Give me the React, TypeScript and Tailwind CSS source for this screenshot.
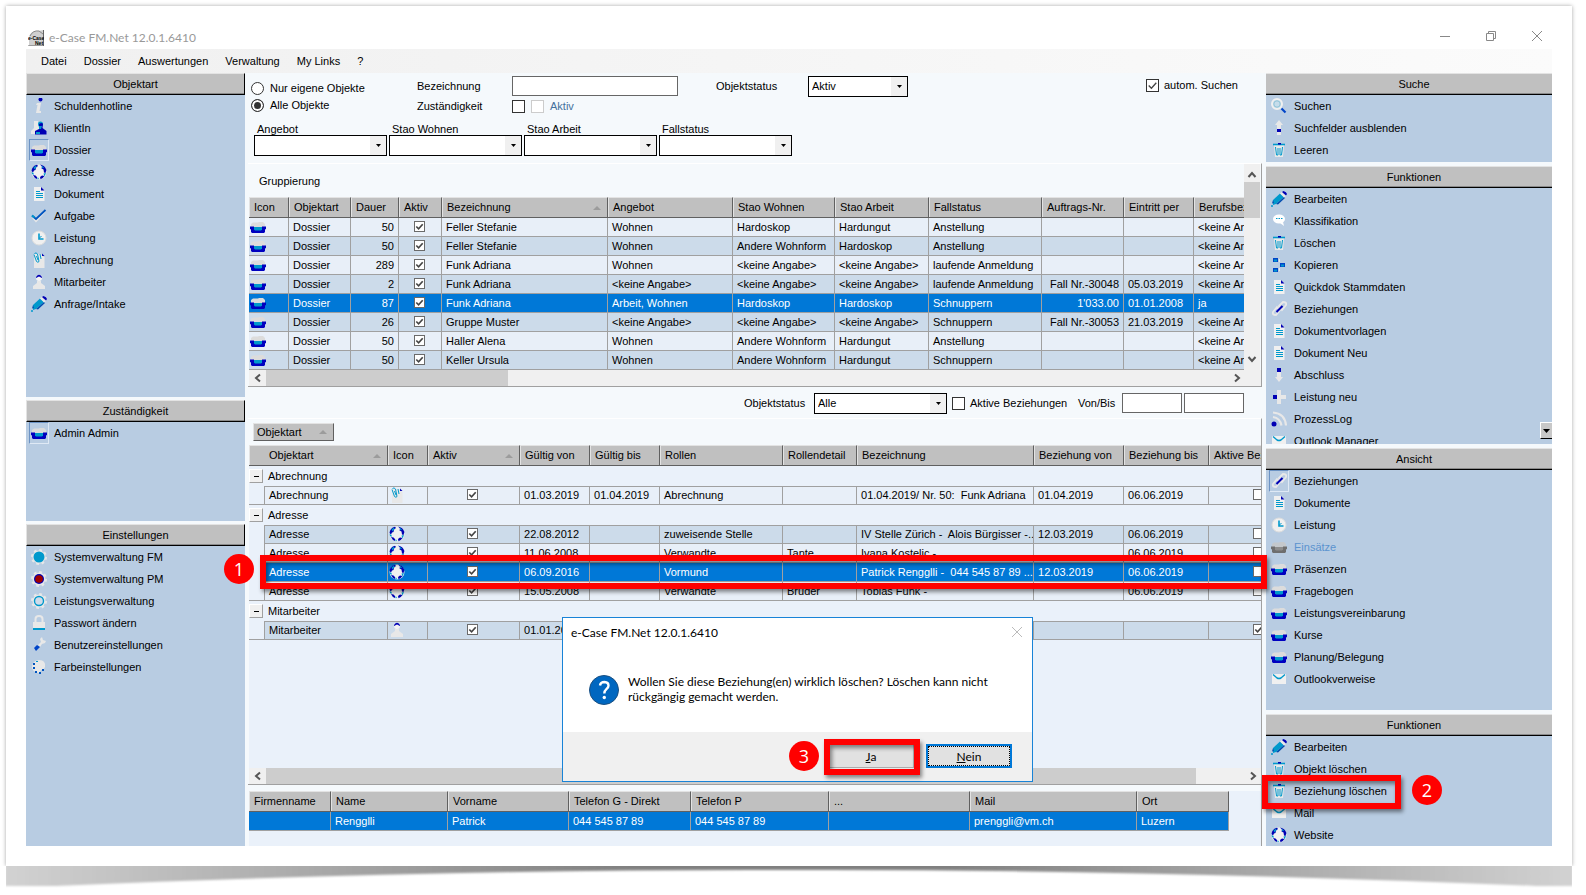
import React from "react";
import clsx from "clsx";

type IconName =
  | "info" | "client" | "dossier" | "globe" | "doc" | "check" | "clock" | "clip" | "user" | "pencil"
  | "gearFull" | "gearRed" | "gearRing" | "lock" | "wrench" | "palette" | "search" | "up" | "trash"
  | "bubble" | "copy" | "link" | "down" | "plus" | "rss" | "mail" | "dossierOff";

interface IconProps {
  name: IconName;
}

const NAVY = "#0000b4";
const CYAN = "#0099cc";
const LIGHT = "#e8e8e8";

const dossier = (body: string, inner: string, lid: string) => (
  <>
    <path d="M1 5l2-1.500h5L9 3h4l2 2v3H1z" fill={lid} />
    <path d="M0 7.500h4V9h8V7.500h4V10l-1 .500V13l-1 1H2l-1-1v-2.500L0 10z" fill={body} />
    <path d="M4 8h8v2.500l-1 1H5l-1-1z" fill={inner} />
  </>
);

const gear = (center: React.ReactNode) => (
  <>
    <circle cx="8" cy="8" r="7" fill="none" stroke={LIGHT} strokeWidth="2" strokeDasharray="2.750 2.750" />
    <circle cx="8" cy="8" r="6.500" fill={LIGHT} />
    {center}
  </>
);

const drawings: Record<IconName, React.ReactNode> = {
  info: (
    <>
      <circle cx="9.500" cy="1.500" r="2" fill={NAVY} />
      <path d="M6 5h4L8.500 13H10v2H5l1.500-8H5z" fill={LIGHT} />
    </>
  ),
  client: (
    <>
      <path d="M3 1h4v5l2 3-2 5H0v-3l3-3z" fill={LIGHT} />
      <circle cx="9.500" cy="4" r="2.500" fill={CYAN} />
      <path d="M8 4q3-2 4 0l-.500 4 4 3v3.500H4V11l4-2z" fill={NAVY} />
      <path d="M8 6h3l-1 3H8zM5 12h4v2H5z" fill={CYAN} />
    </>
  ),
  dossier: dossier("#0000c0", CYAN, "#dcdcdc"),
  dossierOff: dossier("#6e6e6e", "#8c8c8c", "#c4c8cc"),
  globe: (
    <>
      <circle cx="8" cy="8" r="7.500" fill="#f0f0f0" />
      <path d="M.500 7Q1 2 6 .800L7 2 5 3.500 4.500 6 3 6.500 2 8.500zM9 .600Q14 1.500 15.400 6L14.500 9 13 8.500 12.500 5.500 10.500 4.500 11 2.500zM2 11l2.500.500L6 13v2Q3.500 14.500 2 11zM9 13l2-1.500 2.500.500Q12 14.500 9.500 15.300z" fill={NAVY} />
      <path d="M2.500 3.500L5 1.500l.500 1.500-2 2.500zM10.500 1.500l2.500 2-1.500 1zM.600 8l2 1v2L1 10zM12.500 9.500l2.500-.500-1.500 3.500zM6 13.500l2 .500-1 1.500z" fill={CYAN} />
    </>
  ),
  doc: (
    <>
      <path d="M3 1h7l3.500 3.500V15H3z" fill="#f0f0f0" />
      <path d="M10 1l3.500 3.500H10z" fill={NAVY} />
      <path d="M5 5.500h4M5 7.500h7M5 9.500h7M5 11.500h7" stroke={CYAN} />
    </>
  ),
  check: (
    <>
      <path d="M2 9.500L5 13 14 3" fill="none" stroke={LIGHT} strokeWidth="2" />
      <path d="M1 7.500L5 11l9.500-9" fill="none" stroke="#0055c0" strokeWidth="1.800" />
      <path d="M1 7.500L3.500 9.500" stroke={CYAN} strokeWidth="1.800" />
    </>
  ),
  clock: (
    <>
      <circle cx="8" cy="8" r="7" fill="#f0f0f0" stroke="#dcdcdc" />
      <path d="M8 3.500v5.500h4.500" fill="none" stroke={CYAN} strokeWidth="1.600" />
      <path d="M8.500 8l2-2" stroke={CYAN} />
    </>
  ),
  clip: (
    <>
      <path d="M3 2h7l3.500 3.500V16H3z" fill={LIGHT} />
      <path d="M11 1.500l2.500 2.500H11z" fill={NAVY} />
      <path d="M3 2.500l2.500 7q1.500 1.500 2.500 0L6.500 2Q5 0 3.500 1.500M5.500 4l1.500 4M9 2l1 5" fill="none" stroke={CYAN} />
    </>
  ),
  user: (
    <>
      <circle cx="8" cy="4" r="3" fill="#f4f4f4" />
      <path d="M5 3q3-4.500 6 0v1L8 2.500 5 4z" fill={NAVY} />
      <path d="M6 7h4v2l4 3v3H2v-3l4-3z" fill={LIGHT} />
    </>
  ),
  pencil: (
    <>
      <path d="M2 9l7-6.500L13 6l-8 7-3 1z" fill={CYAN} />
      <path d="M5 13l8-7 1 1-7 6.500zM2 9l1 3-2 .500z" fill="#004db0" />
      <path d="M9 2.500l2-1.500 4 4-2 1.500z" fill={LIGHT} />
      <path d="M11 1l1.500-1q3 1 3.500 3l-1 1.500z" fill={NAVY} />
      <circle cx="1" cy="15" r="1" fill={CYAN} />
    </>
  ),
  gearFull: gear(<circle cx="8" cy="8" r="5.500" fill={CYAN} />),
  gearRed: gear(<><circle cx="8" cy="8" r="5" fill={NAVY} /><circle cx="8" cy="8" r="3.800" fill="#a00000" /></>),
  gearRing: gear(<circle cx="8" cy="8" r="4.500" fill="#d0dcea" stroke={CYAN} strokeWidth="1.400" />),
  lock: (
    <>
      <path d="M4.500 7V4q0-3 3.500-3t3.500 3v3" fill="none" stroke={LIGHT} strokeWidth="2" />
      <path d="M2 7h12v6H2z" fill={LIGHT} />
      <path d="M2 13h12v2H2z" fill={CYAN} />
    </>
  ),
  wrench: (
    <>
      <path d="M7 8l3-3-1-3 2-2 1 3 3 1-1 2-3 1-2 3z" fill={LIGHT} />
      <path d="M3 11l3-3 3 2-4 4z" fill="#0044c8" />
    </>
  ),
  palette: (
    <>
      <path d="M8 1q7 0 6 7-1 3-4 3l-2 3Q1 13 1 8q0-6 7-7z" fill={LIGHT} />
      <path d="M2 4h2v2H2zM2 8h2v2H2zM4 12h2v2H4zM8 13h2v2H8zM11 10h2v2h-2z" fill="#0055c0" />
      <path d="M5 2h2v1H5z" fill={CYAN} />
    </>
  ),
  search: (
    <>
      <circle cx="6" cy="6" r="5" fill="#c6dcea" stroke="#f0f0f0" strokeWidth="2" />
      <circle cx="6" cy="6" r="3.200" fill="none" stroke="#8fc4d8" />
      <path d="M10.500 10.500l4 4" stroke="#0044c8" strokeWidth="2.200" />
    </>
  ),
  up: (
    <>
      <path d="M8 0l4 5h-2v4H6V5H4z" fill={LIGHT} />
      <path d="M6 9h4v3H6z" fill={NAVY} />
      <path d="M6 12h4v3H6z" fill={LIGHT} />
    </>
  ),
  down: (
    <>
      <path d="M6 1h4v4H6z" fill={NAVY} />
      <path d="M6 5h4v5h2l-4 5-4-5h2z" fill={LIGHT} />
    </>
  ),
  trash: (
    <>
      <path d="M3 3h10l-1 12H4z" fill={LIGHT} />
      <path d="M2 2.500h12" stroke={CYAN} strokeWidth="1.600" />
      <path d="M7 1h3v1.500H7z" fill={NAVY} />
      <path d="M4.500 5l1 8H7V6M11.500 5l-1 8H9V6" fill="none" stroke={CYAN} />
    </>
  ),
  bubble: (
    <>
      <ellipse cx="8" cy="6" rx="6" ry="4.500" fill="#fff" />
      <path d="M9 10l4 3-1-4z" fill="#fff" />
      <path d="M5 5h1.500v1H5zM7.500 5H9v1H7.500zM10 5h1.500v1H10z" fill={CYAN} />
    </>
  ),
  copy: (
    <>
      <path d="M2 1h5v4H2zM2 11h5v4H2zM9 6h5v4H9z" fill="#0044c8" />
      <path d="M3 2.500h3v2H3zM3 12.500h3v2H3zM10 7.500h3v2h-3z" fill={CYAN} />
      <path d="M8.500 2v3M8.500 11v3" stroke={LIGHT} />
    </>
  ),
  link: (
    <>
      <path d="M2 11l4-5 3 3-4 5q-4 0-3-3zM8 5l4-4q4 0 3 3l-4 5z" fill="none" stroke={LIGHT} strokeWidth="1.800" />
      <path d="M5.500 11l6-6" stroke={NAVY} strokeWidth="2" />
    </>
  ),
  plus: (
    <>
      <path d="M6 1h4v5h5v4h-5v5H6v-5H4V6h2z" fill={LIGHT} />
      <path d="M2 6h4v4H2z" fill={NAVY} />
    </>
  ),
  rss: (
    <>
      <path d="M2 1.500q12 1 13 13M2 6q7 1 8.500 8.500" fill="none" stroke={LIGHT} strokeWidth="2.200" />
      <circle cx="3" cy="13" r="2.500" fill={NAVY} />
    </>
  ),
  mail: (
    <>
      <path d="M1 3h14v10H1z" fill="#f0f0f0" />
      <path d="M2 3.500l4 3.500q2 1 4 0l4-3.500" fill="none" stroke={CYAN} strokeWidth="1.400" />
    </>
  ),
};

const Icon: React.FC<IconProps> = ({ name }) => (
  <svg viewBox="0 0 16 16" className="block h-4 w-4 shrink-0" aria-hidden="true">
    {drawings[name]}
  </svg>
);

interface Item {
  icon: IconName;
  label: string;
  selected?: boolean;
  disabled?: boolean;
}

interface PanelProps {
  title: string;
  items: Item[];
  right?: boolean;
  className?: string;
  children?: React.ReactNode;
}

const Panel: React.FC<PanelProps> = (props) => (
  <section className={clsx("relative flex flex-col overflow-hidden bg-[#b8cce2]", props.className)}>
    <h2
      className={clsx(
        "flex h-[22px] shrink-0 items-center justify-center border-t border-b border-t-[#e3e3e3] border-b-black bg-[#c0c0c0] shadow-[inset_0_-1px_0_#8a8a8a]",
        props.right ? "pl-2.5" : "border-r border-l border-r-black border-l-[#e3e3e3]"
      )}
    >
      {props.title}
    </h2>
    <ul>
      {props.items.map((item) => (
        <li key={item.label}>
          <button
            type="button"
            disabled={item.disabled}
            className={clsx("flex h-[22px] w-full items-center text-left", item.disabled && "text-[#5b93cf]")}
          >
            <span
              className={clsx(
                "mr-[5px] ml-[3px] flex h-[22px] w-5 items-center justify-center border",
                item.selected ? "border-t-[#6c93c4] border-r-[#dfe9f5] border-b-[#dfe9f5] border-l-[#6c93c4]" : "border-transparent"
              )}
            >
              <Icon name={item.icon} />
            </span>
            {item.label}
          </button>
        </li>
      ))}
    </ul>
    {props.children}
  </section>
);

interface CheckProps {
  id?: string;
  label?: string;
  checked?: boolean;
  small?: boolean;
  disabled?: boolean;
}

const Check: React.FC<CheckProps> = ({ id, label, checked, small, disabled }) => (
  <span className={clsx("relative inline-block shrink-0 align-top", small ? "h-[11px] w-[11px]" : "h-[13px] w-[13px]")}>
    <input
      id={id}
      type="checkbox"
      aria-label={label}
      defaultChecked={checked}
      disabled={disabled}
      className={clsx(
        "block h-full w-full appearance-none border bg-white",
        disabled ? "border-[#cccccc]" : small ? "border-[#6a6a6a]" : "border-[#333333]"
      )}
    />
    {checked && (
      <svg viewBox="0 0 12 12" className="pointer-events-none absolute inset-0 h-full w-full">
        <path d="M2.500 6l2.500 2.500L9.500 3.500" fill="none" stroke="#444" strokeWidth={small ? 1.8 : 1.2} />
      </svg>
    )}
  </span>
);

interface ComboProps {
  id: string;
  value?: string;
  className: string;
}

const Combo: React.FC<ComboProps> = ({ id, value, className }) => (
  <span className={clsx("relative block h-[21px]", className)}>
    <select id={id} className="h-full w-full appearance-none border border-black bg-white px-[3px]">
      <option>{value ?? ""}</option>
    </select>
    <span className="pointer-events-none absolute top-px right-px bottom-px flex w-4 items-center justify-center bg-[#f0f0f0]">
      <svg viewBox="0 0 5 3" className="h-[3px] w-[5px]">
        <path d="M0 0h5L2.500 3z" />
      </svg>
    </span>
  </span>
);

const SortMark = () => (
  <svg viewBox="0 0 8 4" className="h-1 w-2 shrink-0">
    <path d="M0 4h8L4 0z" fill="#9c9c9c" />
  </svg>
);

const Chevron: React.FC<{ d: string }> = ({ d }) => (
  <svg viewBox="0 0 10 10" className="h-[10px] w-[10px]">
    <path d={d} fill="none" stroke="#555" strokeWidth="2" />
  </svg>
);

const HScroll: React.FC<{ thumb: string }> = ({ thumb }) => (
  <div className="flex h-4 shrink-0 items-center bg-[#f0f0f0]">
    <span className="flex w-[17px] justify-center"><Chevron d="M7 1.500L3 5l4 3.500" /></span>
    <div className="h-full flex-1">
      <div className={clsx("h-full bg-[#cdcdcd]", thumb)} />
    </div>
    <span className="flex w-[17px] justify-center"><Chevron d="M3 1.500L7 5 3 8.500" /></span>
  </div>
);

const th =
  "h-[21px] overflow-hidden border-t border-r border-b border-t-[#e3e3e3] border-r-[#606060] border-b-[#606060] bg-[#c0c0c0] pl-[5px] text-left font-normal whitespace-nowrap shadow-[inset_1px_0_0_#e3e3e3]";
const td = "h-[19px] overflow-hidden border-r border-b border-[#a0a0a0] pl-1 whitespace-pre";

interface HeadProps {
  label: string;
  sorted?: boolean;
  className?: string;
}

const Head: React.FC<HeadProps> = ({ label, sorted, className }) => (
  <th scope="col" className={clsx(th, className)}>
    <span className="flex items-center justify-between">
      {label}
      {sorted && <span className="pr-1.5"><SortMark /></span>}
    </span>
  </th>
);

const NONE = "<keine Angabe>";
// Dauer, Bezeichnung, Angebot, Stao Wohnen, Stao Arbeit, Fallstatus, Auftrags-Nr., Eintritt per, Berufsbez.
const dossiers = [
  ["50", "Feller Stefanie", "Wohnen", "Hardoskop", "Hardungut", "Anstellung", "", "", NONE],
  ["50", "Feller Stefanie", "Wohnen", "Andere Wohnform", "Hardoskop", "Anstellung", "", "", NONE],
  ["289", "Funk Adriana", "Wohnen", NONE, NONE, "laufende Anmeldung", "", "", NONE],
  ["2", "Funk Adriana", NONE, NONE, NONE, "laufende Anmeldung", "Fall Nr.-30048", "05.03.2019", NONE],
  ["87", "Funk Adriana", "Arbeit, Wohnen", "Hardoskop", "Hardoskop", "Schnuppern", "1'033.00", "01.01.2008", "ja"],
  ["26", "Gruppe Muster", NONE, NONE, NONE, "Schnuppern", "Fall Nr.-30053", "21.03.2019", NONE],
  ["50", "Haller Alena", "Wohnen", "Andere Wohnform", "Hardungut", "Anstellung", "", "", NONE],
  ["50", "Keller Ursula", "Wohnen", "Andere Wohnform", "Hardungut", "Schnuppern", "", "", NONE],
];

interface Relation {
  icon: IconName;
  cells: string[];
  tone: string;
  active?: boolean;
}

const LIGHT_ROW = "bg-[#e8eff8]";
const DARK_ROW = "bg-[#ccdbea]";
const SELECTED_ROW = "bg-[#0078d7] text-white";

// Gültig von, Gültig bis, Rollen, Rollendetail, Bezeichnung, Beziehung von, Beziehung bis
const groups: { name: string; rows: Relation[] }[] = [
  {
    name: "Abrechnung",
    rows: [
      { icon: "clip", tone: LIGHT_ROW, cells: ["01.03.2019", "01.04.2019", "Abrechnung", "", "01.04.2019/ Nr. 50:  Funk Adriana", "01.04.2019", "06.06.2019"] },
    ],
  },
  {
    name: "Adresse",
    rows: [
      { icon: "globe", tone: DARK_ROW, cells: ["22.08.2012", "", "zuweisende Stelle", "", "IV Stelle Zürich -  Alois Bürgisser -...", "12.03.2019", "06.06.2019"] },
      { icon: "globe", tone: LIGHT_ROW, cells: ["11.06.2008", "", "Verwandte", "Tante", "Ivana Kostelic -", "", "06.06.2019"] },
      { icon: "globe", tone: SELECTED_ROW, cells: ["06.09.2016", "", "Vormund", "", "Patrick Rengglli -  044 545 87 89 ...", "12.03.2019", "06.06.2019"] },
      { icon: "globe", tone: LIGHT_ROW, cells: ["15.05.2008", "", "Verwandte", "Bruder", "Tobias Funk -", "", "06.06.2019"] },
    ],
  },
  {
    name: "Mitarbeiter",
    rows: [
      { icon: "user", tone: DARK_ROW, active: true, cells: ["01.01.2008", "", "", "", "", "", ""] },
    ],
  },
];

const SearchForm = () => (
  <form className="relative h-[90px] shrink-0 pt-[3px] pl-[3px]">
    <div className="flex items-start">
      <fieldset className="flex w-[166px] flex-col gap-1 pt-1.5">
        {["Nur eigene Objekte", "Alle Objekte"].map((label, i) => (
          <label key={label} className="flex h-[13px] items-center gap-1.5">
            <input
              type="radio"
              name="scope"
              defaultChecked={i === 1}
              className="h-[13px] w-[13px] appearance-none rounded-full border border-[#333] bg-white checked:bg-[#333] checked:shadow-[inset_0_0_0_2px_#fff]"
            />
            {label}
          </label>
        ))}
      </fieldset>
      <div className="grid w-[391px] grid-cols-[95px_auto] justify-start gap-y-1">
        <label htmlFor="bez" className="flex items-center">Bezeichnung</label>
        <input id="bez" type="text" className="h-5 w-[166px] border border-[#666] bg-white px-1" />
        <label htmlFor="zust" className="flex items-center">Zuständigkeit</label>
        <div className="flex items-center gap-1.5">
          <Check id="zust" />
          <Check id="zust-aktiv" disabled />
          <label htmlFor="zust-aktiv" className="text-[#44719c]">Aktiv</label>
        </div>
      </div>
      <div className="mr-auto -ml-[92px] flex items-center">
        <label htmlFor="status" className="w-[92px]">Objektstatus</label>
        <Combo id="status" value="Aktiv" className="w-[100px]" />
      </div>
      <label htmlFor="auto" className="mt-[3px] mr-6 flex items-center gap-[5px]">
        <Check id="auto" checked />
        autom. Suchen
      </label>
    </div>
    <div className="mt-2.5 flex gap-0.5 pl-[3px]">
      {["Angebot", "Stao Wohnen", "Stao Arbeit", "Fallstatus"].map((label) => (
        <div key={label}>
          <label htmlFor={label} className="block h-3 pl-[3px] leading-3">{label}</label>
          <Combo id={label} className="w-[133px]" />
        </div>
      ))}
    </div>
  </form>
);

const DossierGrid = () => (
  <div className="flex shrink-0 flex-col border-t border-r border-b border-t-white border-r-[#a0a0a0] border-b-[#a0a0a0] pl-px">
    <div className="flex pr-px">
      <div className="min-w-0 flex-1 overflow-hidden">
        <p className="flex h-[33px] items-center pt-0.5 pl-[10px]">Gruppierung</p>
        <table className="w-full table-fixed border-separate border-spacing-0">
          <colgroup>
            <col className="w-[40px]" />
            <col className="w-[62px]" />
            <col className="w-[48px]" />
            <col className="w-[43px]" />
            <col className="w-[166px]" />
            <col className="w-[125px]" />
            <col className="w-[102px]" />
            <col className="w-[94px]" />
            <col className="w-[113px]" />
            <col className="w-[82px]" />
            <col className="w-[70px]" />
            <col />
          </colgroup>
          <thead>
            <tr>
              {["Icon", "Objektart", "Dauer", "Aktiv", "Bezeichnung", "Angebot", "Stao Wohnen", "Stao Arbeit", "Fallstatus", "Auftrags-Nr.", "Eintritt per", "Berufsbez."].map((label) => (
                <Head key={label} label={label} sorted={label === "Bezeichnung"} className={label === "Berufsbez." ? "border-r-0" : undefined} />
              ))}
            </tr>
          </thead>
          <tbody>
            {dossiers.map((row, i) => (
              <tr key={i} className={i === 4 ? SELECTED_ROW : i % 2 || i === 5 ? DARK_ROW : LIGHT_ROW}>
                <td className={clsx(td, "pl-px")}><Icon name="dossier" /></td>
                <td className={td}>Dossier</td>
                <td className={clsx(td, "pr-1 text-right")}>{row[0]}</td>
                <td className={clsx(td, "pr-1.5 text-center")}><Check small checked label="Aktiv" /></td>
                {row.slice(1).map((cell, j) => (
                  <td key={j} className={clsx(td, j === 5 && "pr-1 text-right", j === 7 && "border-r-0")}>{cell}</td>
                ))}
              </tr>
            ))}
          </tbody>
        </table>
      </div>
      <div className="flex w-4 flex-col items-center bg-[#f0f0f0] py-1">
        <span className="flex h-[14px] items-center"><Chevron d="M1.500 7L5 3l3.500 4" /></span>
        <div className="h-9 w-full bg-[#cdcdcd]" />
        <span className="mt-auto flex h-[14px] items-center"><Chevron d="M1.500 3L5 7l3.500-4" /></span>
      </div>
    </div>
    <div className="bg-[#f0f0f0] pr-4">
      <HScroll thumb="w-[242px]" />
    </div>
  </div>
);

const RelationFilter = () => (
  <form className="flex h-[31px] shrink-0 items-center justify-end pt-px pr-[18px]">
    <label htmlFor="rel-status" className="mr-2 w-[62px]">Objektstatus</label>
    <Combo id="rel-status" value="Alle" className="w-[133px]" />
    <label htmlFor="rel-aktiv" className="ml-[5px] flex w-[126px] items-center gap-[5px]">
      <Check id="rel-aktiv" />
      Aktive Beziehungen
    </label>
    <label htmlFor="von" className="mr-1 w-10">Von/Bis</label>
    <input id="von" type="text" className="mr-0.5 h-5 w-[60px] border border-[#666] bg-white px-1" />
    <input type="text" aria-label="Bis" className="h-5 w-[60px] border border-[#666] bg-white px-1" />
  </form>
);

const RelationGrid = () => (
  <div className="flex min-h-0 flex-1 flex-col border-t border-r border-b border-t-white border-r-[#a0a0a0] border-b-[#a0a0a0] pl-px">
    <div className="flex h-[26px] shrink-0 items-center pl-1">
      <button type="button" className="flex h-[18px] w-[81px] items-center justify-between border border-t-[#e3e3e3] border-r-[#606060] border-b-[#606060] border-l-[#e3e3e3] bg-[#c0c0c0] pr-1.5 pl-[3px]">
        Objektart
        <SortMark />
      </button>
    </div>
    <div className="min-h-0 flex-1 overflow-hidden bg-[#eaf1fa]">
      <table className="w-full table-fixed border-separate border-spacing-0">
        <colgroup>
          <col className="w-4" />
          <col className="w-[123px]" />
          <col className="w-[40px]" />
          <col className="w-[92px]" />
          <col className="w-[70px]" />
          <col className="w-[70px]" />
          <col className="w-[123px]" />
          <col className="w-[74px]" />
          <col className="w-[177px]" />
          <col className="w-[90px]" />
          <col className="w-[85px]" />
          <col />
        </colgroup>
        <thead>
          <tr>
            <th scope="col" colSpan={2} className={clsx(th, "pl-[20px]")}>
              <span className="flex items-center justify-between pr-1.5">
                Objektart
                <SortMark />
              </span>
            </th>
            <Head label="Icon" />
            <Head label="Aktiv" sorted />
            {["Gültig von", "Gültig bis", "Rollen", "Rollendetail", "Bezeichnung", "Beziehung von", "Beziehung bis"].map((label) => (
              <Head key={label} label={label} />
            ))}
            <Head label="Aktive Beziehungen" className="border-r-0" />
          </tr>
        </thead>
        {groups.map((group) => (
          <tbody key={group.name}>
            <tr>
              <th scope="rowgroup" colSpan={12} className="h-5 p-0 text-left font-normal">
                <span className="flex items-center gap-[5px]">
                  <button type="button" aria-label={group.name} className="flex h-[14px] w-[14px] items-center justify-center border border-t-white border-r-[#a0a0a0] border-b-[#a0a0a0] border-l-white bg-[#f0f0f0]">
                    <span className="h-px w-[5px] bg-black" />
                  </button>
                  {group.name}
                </span>
              </th>
            </tr>
            {group.rows.map((row, i) => {
              const top = i === 0 && "shadow-[inset_0_1px_0_#a0a0a0]";
              return (
                <tr key={i} className={row.tone}>
                  <td className={clsx("h-[19px] border-r border-[#a0a0a0] bg-[#eaf1fa]", i === group.rows.length - 1 && "border-b")} />
                  <td className={clsx(td, top)}>{group.name}</td>
                  <td className={clsx(td, top, "pl-px")}><Icon name={row.icon} /></td>
                  <td className={clsx(td, top, "pr-1.5 text-center")}><Check small checked label="Aktiv" /></td>
                  {row.cells.map((cell, j) => (
                    <td key={j} className={clsx(td, top)}>{cell}</td>
                  ))}
                  <td className={clsx(td, top, "border-r-0 pl-[44px]")}>
                    <Check small checked={row.active} label="Aktive Beziehung" />
                  </td>
                </tr>
              );
            })}
          </tbody>
        ))}
      </table>
    </div>
    <HScroll thumb="mr-[48px]" />
  </div>
);

const contact = ["", "Rengglli", "Patrick", "044 545 87 89", "044 545 87 89", "", "prenggli@vm.ch", "Luzern"];

const ContactGrid = () => (
  <div className="h-[61px] shrink-0 border-r border-[#a0a0a0] bg-[#f5f9fc] pt-1.5 pl-px">
    <div className="h-full bg-[#eaf1fa]">
      <table className="w-[980px] table-fixed border-separate border-spacing-0">
        <colgroup>
          <col className="w-[82px]" />
          <col className="w-[117px]" />
          <col className="w-[121px]" />
          <col className="w-[122px]" />
          <col className="w-[138px]" />
          <col className="w-[141px]" />
          <col className="w-[167px]" />
          <col className="w-[92px]" />
        </colgroup>
        <thead>
          <tr>
            {["Firmenname", "Name", "Vorname", "Telefon G - Direkt", "Telefon P", "...", "Mail", "Ort"].map((label) => (
              <Head key={label} label={label} />
            ))}
          </tr>
        </thead>
        <tbody>
          <tr className={SELECTED_ROW}>
            {contact.map((cell, i) => (
              <td key={i} className={td}>{cell}</td>
            ))}
          </tr>
        </tbody>
      </table>
    </div>
  </div>
);

const ConfirmDialog = () => (
  <div role="dialog" aria-label="e-Case FM.Net 12.0.1.6410" className="absolute top-[544px] left-[314px] flex h-[165px] w-[471px] flex-col border border-[#1883d7] bg-white font-['Lato',sans-serif] text-[12px] leading-[15px]">
    <div className="flex h-7 items-center justify-between pr-[10px] pl-2">
      <span>e-Case FM.Net 12.0.1.6410</span>
      <button type="button" aria-label="Schliessen">
        <svg viewBox="0 0 10 10" className="h-[10px] w-[10px]">
          <path d="M0 0l10 10M10 0L0 10" stroke="#bbb" />
        </svg>
      </button>
    </div>
    <div className="flex flex-1 items-start pt-7 pl-[26px]">
      <svg viewBox="0 0 30 30" className="mt-px h-[30px] w-[30px] shrink-0">
        <circle cx="15" cy="15" r="14.500" fill="#0067c0" stroke="#1a4f80" />
        <path d="M11 10.500Q11.500 7 15.500 7 19.500 7.200 19.500 10.700C19.500 14 15.300 14 15.300 18.500" fill="none" stroke="#fff" strokeWidth="2.400" />
        <circle cx="15.300" cy="22.500" r="1.700" fill="#fff" />
      </svg>
      <p className="ml-[9px] w-[385px]">
        Wollen Sie diese Beziehung(en) wirklich löschen? Löschen kann nicht rückgängig gemacht werden.
      </p>
    </div>
    <div className="flex h-[49px] items-start justify-end gap-3 bg-[#f0f0f0] pt-3 pr-5">
      <button type="button" className="h-6 w-[86px] border border-[#adadad] bg-[#e1e1e1]">
        <u>J</u>a
      </button>
      <button type="button" className="h-6 w-[86px] border-2 border-[#0078d7] bg-[#e1e1e1] outline-1 -outline-offset-3 outline-dotted outline-black">
        <u>N</u>ein
      </button>
    </div>
  </div>
);

const Marker: React.FC<{ className: string }> = ({ className }) => (
  <div className={clsx("pointer-events-none absolute z-10 border-[6px] border-[#ff0000] shadow-[2px_3px_4px_rgba(0,0,0,0.45),inset_2px_3px_4px_rgba(0,0,0,0.45)]", className)} />
);

const Step: React.FC<{ n: number; className: string }> = ({ n, className }) => (
  <div className={clsx("absolute z-10 flex h-[30px] w-[30px] items-center justify-center rounded-full bg-[#ff0000] font-['Open_Sans',sans-serif] text-[18px] text-white", className)}>
    {n}
  </div>
);

const Logo = () => (
  <svg viewBox="0 0 16 16" className="h-4 w-4" aria-hidden="true">
    <path d="M15.500 0v16H1V8q1-8 9-7z" fill="#d0d0d0" />
    <path d="M2 6q3-6 9-5l4 3" fill="none" stroke="#888" />
    <path d="M15.500 0v16H0" fill="none" stroke="#666" />
    <text x="0" y="9.500" fontSize="5" fontWeight="700" fontFamily="Liberation Sans, sans-serif">e-Case</text>
    <text x="7" y="14.500" fontSize="5" fontWeight="700" fontFamily="Liberation Sans, sans-serif">Net</text>
  </svg>
);

const TitleBar = () => (
  <header>
    <div className="flex h-[23px] items-center pl-0.5">
      <Logo />
      <span className="ml-[5px] font-['Lato',sans-serif] text-[12px] text-[#999]">e-Case FM.Net 12.0.1.6410</span>
      <div className="mr-[10px] mb-1 ml-auto flex gap-9">
        <button type="button" aria-label="Minimieren">
          <svg viewBox="0 0 10 10" className="h-[10px] w-[10px]"><path d="M0 5.500h10" stroke="#888" /></svg>
        </button>
        <button type="button" aria-label="Verkleinern">
          <svg viewBox="0 0 10 10" className="h-[10px] w-[10px]">
            <path d="M.500 2.500h7v7h-7zM2.500 2V.500h7v7H8" fill="none" stroke="#888" />
          </svg>
        </button>
        <button type="button" aria-label="Schliessen">
          <svg viewBox="0 0 10 10" className="h-[10px] w-[10px]"><path d="M0 0l10 10M10 0L0 10" stroke="#888" /></svg>
        </button>
      </div>
    </div>
    <nav className="flex h-6 items-center gap-[17px] bg-linear-to-r from-[#f0f0f0] to-[#fbfbfb] pl-[15px]">
      {["Datei", "Dossier", "Auswertungen", "Verwaltung", "My Links", "?"].map((label) => (
        <button key={label} type="button">{label}</button>
      ))}
    </nav>
  </header>
);

const Sidebar = () => (
  <aside className="flex w-[219px] shrink-0 flex-col gap-[3px]">
    <Panel
      title="Objektart"
      className="h-[324px]"
      items={[
        { icon: "info", label: "Schuldenhotline" },
        { icon: "client", label: "KlientIn" },
        { icon: "dossier", label: "Dossier", selected: true },
        { icon: "globe", label: "Adresse" },
        { icon: "doc", label: "Dokument" },
        { icon: "check", label: "Aufgabe" },
        { icon: "clock", label: "Leistung" },
        { icon: "clip", label: "Abrechnung" },
        { icon: "user", label: "Mitarbeiter" },
        { icon: "pencil", label: "Anfrage/Intake" },
      ]}
    />
    <Panel title="Zuständigkeit" className="h-[121px]" items={[{ icon: "dossier", label: "Admin Admin", selected: true }]} />
    <Panel
      title="Einstellungen"
      className="flex-1"
      items={[
        { icon: "gearFull", label: "Systemverwaltung FM" },
        { icon: "gearRed", label: "Systemverwaltung PM" },
        { icon: "gearRing", label: "Leistungsverwaltung" },
        { icon: "lock", label: "Passwort ändern" },
        { icon: "wrench", label: "Benutzereinstellungen" },
        { icon: "palette", label: "Farbeinstellungen" },
      ]}
    />
  </aside>
);

const Actions = () => (
  <aside className="relative flex w-[286px] shrink-0 flex-col gap-1">
    <Panel
      right
      title="Suche"
      className="h-[89px]"
      items={[
        { icon: "search", label: "Suchen" },
        { icon: "up", label: "Suchfelder ausblenden" },
        { icon: "trash", label: "Leeren" },
      ]}
    />
    <Panel
      right
      title="Funktionen"
      className="h-[278px]"
      items={[
        { icon: "pencil", label: "Bearbeiten" },
        { icon: "bubble", label: "Klassifikation" },
        { icon: "trash", label: "Löschen" },
        { icon: "copy", label: "Kopieren" },
        { icon: "doc", label: "Quickdok Stammdaten" },
        { icon: "link", label: "Beziehungen" },
        { icon: "doc", label: "Dokumentvorlagen" },
        { icon: "doc", label: "Dokument Neu" },
        { icon: "down", label: "Abschluss" },
        { icon: "plus", label: "Leistung neu" },
        { icon: "rss", label: "ProzessLog" },
        { icon: "mail", label: "Outlook Manager" },
      ]}
    >
      <button type="button" aria-label="Nach unten" className="absolute right-0 bottom-[5px] flex h-[17px] w-3 items-center justify-center border-t border-b border-l border-t-white border-b-black border-l-white bg-[#c8c8c8]">
        <svg viewBox="0 0 7 4" className="h-1 w-[7px]"><path d="M0 0h7L3.500 4z" /></svg>
      </button>
    </Panel>
    <Panel
      right
      title="Ansicht"
      className="h-[262px]"
      items={[
        { icon: "link", label: "Beziehungen", selected: true },
        { icon: "doc", label: "Dokumente" },
        { icon: "clock", label: "Leistung" },
        { icon: "dossierOff", label: "Einsätze", disabled: true },
        { icon: "dossier", label: "Präsenzen" },
        { icon: "dossier", label: "Fragebogen" },
        { icon: "dossier", label: "Leistungsvereinbarung" },
        { icon: "dossier", label: "Kurse" },
        { icon: "dossier", label: "Planung/Belegung" },
        { icon: "mail", label: "Outlookverweise" },
      ]}
    />
    <Panel
      right
      title="Funktionen"
      className="flex-1"
      items={[
        { icon: "pencil", label: "Bearbeiten" },
        { icon: "trash", label: "Objekt löschen" },
        { icon: "trash", label: "Beziehung löschen" },
        { icon: "mail", label: "Mail" },
        { icon: "globe", label: "Website" },
      ]}
    />
    <Marker className="top-[702px] -left-1 h-[34px] w-[139px]" />
    <Step n={2} className="top-[702px] left-[146px]" />
  </aside>
);

// curled paper shadow under the card
const CardShadow = () => (
  <svg viewBox="0 0 1566 28" preserveAspectRatio="none" className="absolute top-full left-0 h-7 w-full" aria-hidden="true">
    <defs>
      <linearGradient id="curl">
        <stop offset="0" stopColor="#d2d2d2" />
        <stop offset="0.200" stopColor="#a8a8a8" />
        <stop offset="0.400" stopColor="#808080" />
        <stop offset="0.600" stopColor="#808080" />
        <stop offset="0.800" stopColor="#a8a8a8" />
        <stop offset="1" stopColor="#d2d2d2" />
      </linearGradient>
      <filter id="soft" x="-1%" y="-50%" width="102%" height="200%">
        <feGaussianBlur stdDeviation="1.200" />
      </filter>
    </defs>
    <path d="M-1-6H1567V20L1530 20Q1130 3 783 4 440 3 50 20L-1 20z" fill="url(#curl)" filter="url(#soft)" />
  </svg>
);

const App: React.FC = () => {
  return (
    <div className="flex min-h-screen flex-col overflow-hidden bg-white pt-1.5 pr-[14px] pb-[29px] pl-1.5 font-['Liberation_Sans',sans-serif] text-[11px] leading-[13px] text-black">
      <div className="relative flex flex-1 flex-col">
        <CardShadow />
        <div className="relative flex flex-1 flex-col bg-white p-5 shadow-[0_0_4px_rgba(0,0,0,0.35)] [clip-path:inset(-6px_-6px_0_-6px)]">
          <TitleBar />
          <div className="flex flex-1 bg-[#f5f9fc]">
            <Sidebar />
            <main className="relative mr-1 ml-[3px] flex min-w-0 flex-1 flex-col">
              <SearchForm />
              <DossierGrid />
              <RelationFilter />
              <RelationGrid />
              <ContactGrid />
              <ConfirmDialog />
              <Marker className="top-[482px] -right-[5px] left-3 h-[34px]" />
              <Step n={1} className="top-[481px] -left-6" />
              <Marker className="top-[666px] left-[576px] h-9 w-24" />
              <Step n={3} className="top-[668px] left-[541px]" />
            </main>
            <Actions />
          </div>
        </div>
      </div>
    </div>
  );
};

export default App;
